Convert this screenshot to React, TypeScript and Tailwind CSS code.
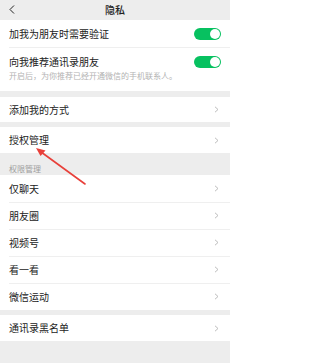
import React from "react";

const font = { fontFamily: '"Noto Sans CJK SC", "Noto Sans", sans-serif' };

function Chevron() {
  return (
    <svg width="5" height="7" viewBox="0 0 5 7" className="shrink-0">
      <polyline points="1,0.8 4,3.5 1,6.2" fill="none" stroke="#b5b5b5" strokeWidth="0.9" />
    </svg>
  );
}

function Toggle() {
  return (
    <div className="w-[27px] h-[12px] rounded-full bg-[#07c160] flex items-center justify-end pr-[1px] shrink-0">
      <div className="w-[10px] h-[10px] rounded-full bg-white" />
    </div>
  );
}

function Row({ label, h, divider }: { label: string; h: string; divider?: boolean }) {
  return (
    <div className="relative">
      {divider && <div className="absolute top-0 left-[9px] right-0 h-px bg-[#efefef]" />}
      <div className={`flex items-center justify-between pl-[9px] pr-[11px] ${h}`}>
        <span className="text-[10px] leading-[12px] text-[#222]">{label}</span>
        <Chevron />
      </div>
    </div>
  );
}

export default function App() {
  return (
    <div className="relative w-[230px] h-[363px] bg-[#ededed] overflow-hidden" style={font}>
      {/* header */}
      <div className="relative h-[20px] flex items-center justify-center">
        <svg width="6" height="9" viewBox="0 0 6 9" className="absolute left-[9px] top-[5px]">
          <polyline points="5,0.5 1,4.5 5,8.5" fill="none" stroke="#222" strokeWidth="1" />
        </svg>
        <span className="text-[10px] leading-[12px] font-medium text-[#222]">隐私</span>
      </div>

      {/* toggles */}
      <div className="bg-white">
        <div className="h-[27px] flex items-center justify-between pl-[9px] pr-[9px]">
          <span className="text-[10px] leading-[12px] text-[#222]">加我为朋友时需要验证</span>
          <Toggle />
        </div>
        <div className="ml-[9px] h-px bg-[#efefef]" />
        <div className="h-[43px] pl-[9px] pr-[9px] pt-[8px]">
          <div className="flex items-center justify-between">
            <span className="text-[10px] leading-[12px] text-[#222]">向我推荐通讯录朋友</span>
            <Toggle />
          </div>
          <div className="mt-[2px] text-[8px] leading-[11px] text-[#b2b2b2]">
            开启后，为你推荐已经开通微信的手机联系人。
          </div>
        </div>
      </div>

      <div className="h-[6px]" />
      <div className="bg-white">
        <Row label="添加我的方式" h="h-[25px]" />
      </div>
      <div className="h-[5px]" />
      <div className="bg-white">
        <Row label="授权管理" h="h-[26px]" />
      </div>

      <div className="h-[22px] pl-[9px] pt-[10px] text-[8px] leading-[11px] text-[#a0a0a0]">权限管理</div>

      <div className="bg-white">
        <Row label="仅聊天" h="h-[27px]" />
        <Row label="朋友圈" h="h-[27px]" divider />
        <Row label="视频号" h="h-[27px]" divider />
        <Row label="看一看" h="h-[27px]" divider />
        <Row label="微信运动" h="h-[27px]" divider />
      </div>
      <div className="h-[5px]" />
      <div className="bg-white">
        <Row label="通讯录黑名单" h="h-[26px]" />
      </div>

      {/* red annotation arrow */}
      <svg className="absolute left-0 top-0 pointer-events-none" width="230" height="363" viewBox="0 0 230 363">
        <line x1="85" y1="184" x2="39" y2="150.5" stroke="#e8403a" strokeWidth="1.6" strokeLinecap="round" />
        <polygon points="36,148 45.5,150.5 40.5,156" fill="#e8403a" />
      </svg>
    </div>
  );
}
